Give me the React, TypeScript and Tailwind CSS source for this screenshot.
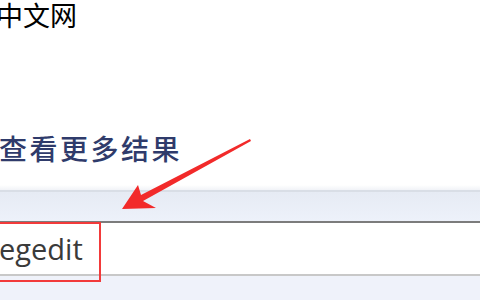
export default function App() {
  return (
    <div className="relative w-[480px] h-[300px] overflow-hidden bg-white flex flex-col">
      <div className="h-[185px] flex flex-col">
        <div
          className="-ml-[4px] mt-[1px] text-[27px] leading-none text-black"
          style={{ fontFamily: '"Noto Sans CJK SC", sans-serif' }}
        >
          中文网
        </div>
        <div
          className="mt-[106px] -ml-[1px] text-[28px] leading-none font-medium tracking-[2.5px] text-[#2f3b6b]"
          style={{ fontFamily: '"Noto Sans CJK SC", sans-serif' }}
        >
          查看更多结果
        </div>
      </div>
      <div className="h-[5px] bg-gradient-to-b from-white to-[#f1f3f7]" />
      <div className="h-[31px] border-t-2 border-[#d9dee6] bg-gradient-to-b from-[#e6ebf4] to-[#edf1fa]" />
      <div className="h-[55px] border-t-2 border-[#7c7c7c] border-b-2 border-b-[#c8c8c8] bg-white flex items-center">
        <span
          className="-ml-[1px] text-[29px] leading-none font-medium text-[#3a3a3a]"
          style={{ fontFamily: '"Open Sans", sans-serif' }}
        >
          egedit
        </span>
      </div>
      <div className="flex-1 bg-[#eff2fa]" />

      <div className="absolute left-[-4px] top-[222px] w-[105px] h-[60px] border-2 border-[#f23a3a]" />

      <svg className="absolute left-0 top-0" width="480" height="300" viewBox="0 0 480 300">
        <polygon
          points="122,209 138,185 141,195 250,139 251,141 143,201 156,208"
          fill="#f22a2a"
        />
      </svg>
    </div>
  );
}
